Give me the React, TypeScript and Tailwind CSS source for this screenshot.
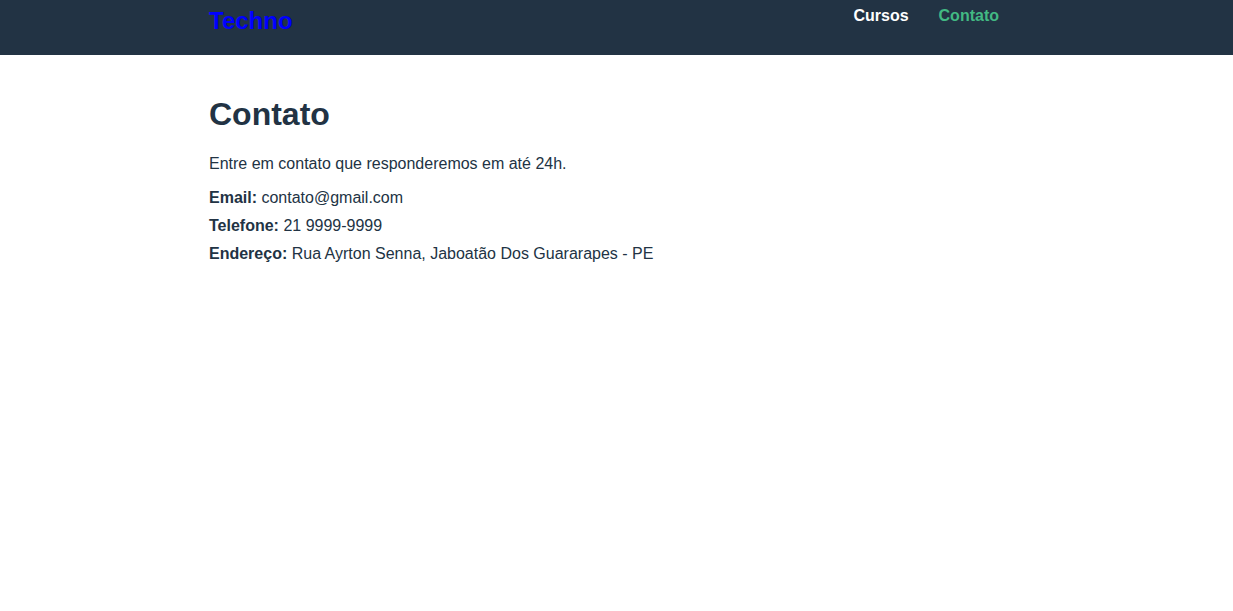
export default function App() {
  return (
    <div className="min-h-screen bg-white text-[#223344]" style={{ fontFamily: '"Liberation Sans", Arial, sans-serif' }}>
      <header className="h-[55px] bg-[#223344]">
        <div className="mx-auto flex max-w-[815px] items-start justify-between pt-[7px]">
          <a href="#" className="text-[24px] font-bold leading-[28px] text-[#0000ff]">Techno</a>
          <nav className="flex gap-[30px] pr-[25px]">
            <a href="#" className="text-[16px] font-bold leading-[18px] text-white">Cursos</a>
            <a href="#" className="text-[16px] font-bold leading-[18px] text-[#42b983]">Contato</a>
          </nav>
        </div>
      </header>
      <main className="mx-auto max-w-[815px] pt-[41px]">
        <h1 className="text-[32px] font-bold leading-[37px]">Contato</h1>
        <p className="mt-[17px] text-[16px] leading-7">Entre em contato que responderemos em até 24h.</p>
        <ul className="mt-[6px] text-[16px] leading-7">
          <li><span className="font-bold">Email:</span> contato@gmail.com</li>
          <li><span className="font-bold">Telefone:</span> 21 9999-9999</li>
          <li><span className="font-bold">Endereço:</span> Rua Ayrton Senna, Jaboatão Dos Guararapes - PE</li>
        </ul>
      </main>
    </div>
  );
}
